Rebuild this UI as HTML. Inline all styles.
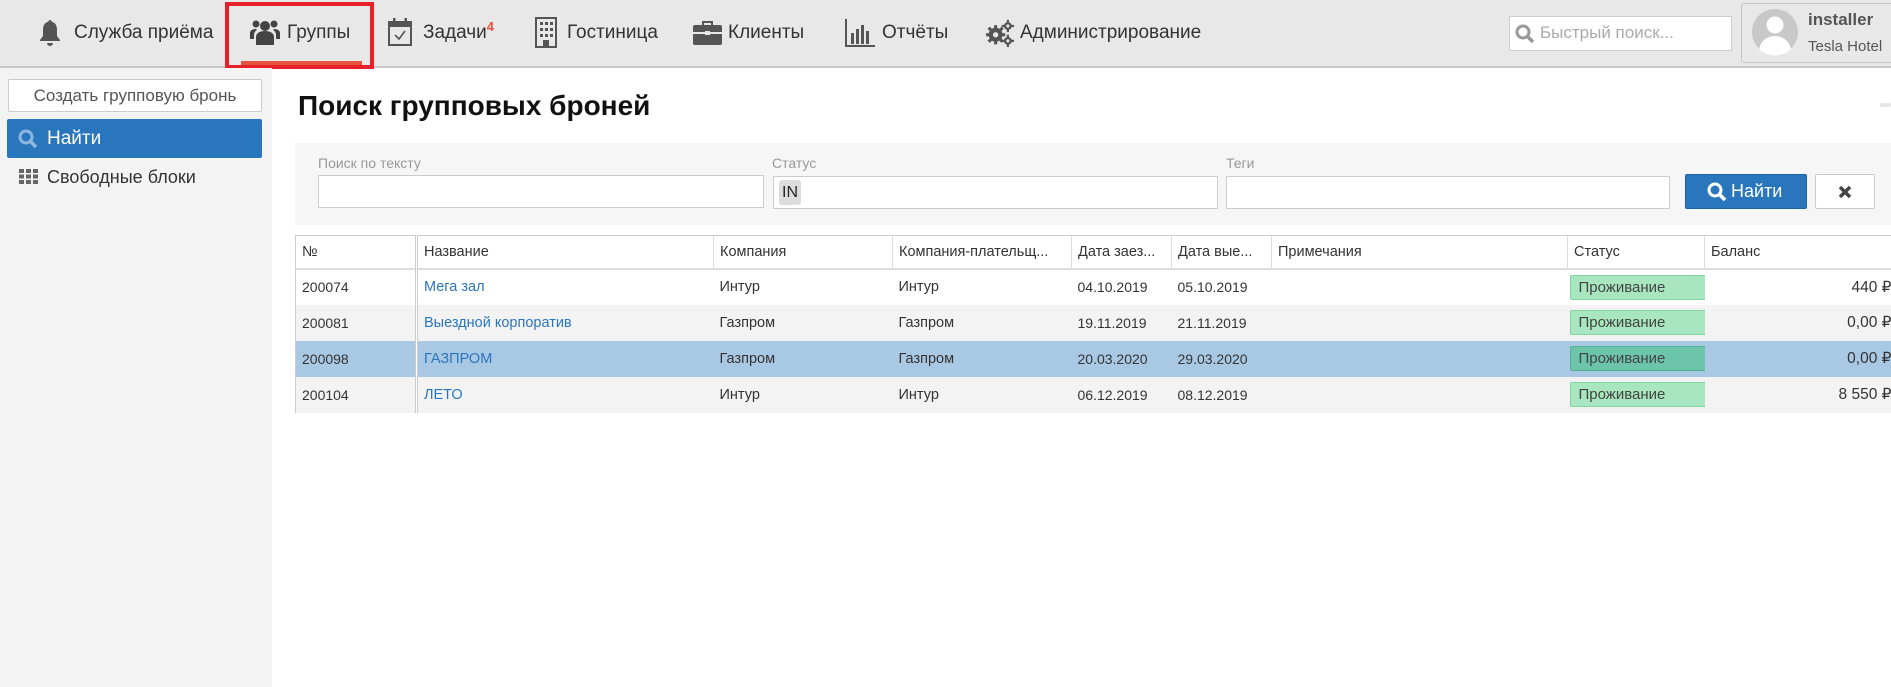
<!DOCTYPE html>
<html><head><meta charset="utf-8">
<style>
*{box-sizing:border-box;margin:0;padding:0}
body{width:1891px;height:687px;overflow:hidden;background:#fff;font-family:"Liberation Sans",sans-serif;color:#333;position:relative}
.abs{position:absolute}
#top{left:0;top:0;width:1891px;height:68px;background:#e8e8e8;border-bottom:2px solid #c8c8c8}
.nav{position:absolute;top:21px;font-size:19px;color:#333;white-space:nowrap;line-height:24px}
.ico{position:absolute;top:18px}
#side{left:0;top:68px;width:272px;height:619px;background:#f3f3f3}
.inp{position:absolute;background:#fff;border:1px solid #ccc}
.lbl{position:absolute;top:155px;font-size:14px;color:#999}
table{position:absolute;left:295px;top:235px;border-collapse:collapse;table-layout:fixed;width:1596px;font-size:14.5px}
th{font-weight:normal;text-align:left;height:33px;padding:0 6px;border-top:1px solid #ccc;border-bottom:2px solid #ddd;border-left:1px solid #ddd;white-space:nowrap;overflow:hidden;color:#333}
td{height:36px;padding:0 6px;white-space:nowrap;overflow:hidden}
tr.g td{background:#f3f3f3}
tr.s td{background:#a9c8e4}
td.n{font-size:14px}
td.c2{border-left:3px double #ccc}
th.c2{border-left:3px double #ccc}
a{color:#2a76bd;text-decoration:none}
.badge{display:block;width:139px;height:25px;line-height:23px;background:#a8e6bf;border:1px solid #7fd69f;border-radius:2px;padding-left:8px;color:#444;font-size:15px;margin-left:-4px}
tr.s .badge{background:#6cc4aa;border-color:#4fb58f}
td.r{text-align:right;padding-right:0;font-size:15.5px}
</style></head><body>
<div id="top" class="abs"></div>
<svg class="ico" style="left:38px" width="24" height="30" viewBox="0 0 24 30"><path d="M12 2c-1 0-1.6.7-1.6 1.6C6.5 4.5 5 7.7 5 12v6l-3 4v1h20v-1l-3-4v-6c0-4.3-1.5-7.5-5.4-8.4C13.6 2.7 13 2 12 2zM9 25a3 3 0 006 0z" fill="#555"/></svg>
<div class="nav" style="left:74px">Служба приёма</div>
<svg class="ico" style="left:250px;top:17px" width="30" height="30" viewBox="0 0 30 30"><circle cx="15" cy="9" r="5" fill="#444"/><circle cx="6" cy="7" r="3.5" fill="#444"/><circle cx="24" cy="7" r="3.5" fill="#444"/><path d="M6 28v-8c0-4 4-6 9-6s9 2 9 6v8z" fill="#444"/><path d="M0 22v-6c0-2 2-4 6-4l1 1c-2 1-3 3-3 5v4z M30 22v-6c0-2-2-4-6-4l-1 1c2 1 3 3 3 5v4z" fill="#444"/></svg>
<div class="nav" style="left:287px">Группы</div>
<div class="abs" style="left:241px;top:61px;width:121px;height:4px;background:#e5533d"></div>
<div class="abs" style="left:225px;top:2px;width:149px;height:67px;border:4px solid #e8202a"></div>
<svg class="ico" style="left:387px;top:17px" width="26" height="30" viewBox="0 0 26 30"><rect x="2" y="5" width="22" height="23" fill="none" stroke="#555" stroke-width="2"/><rect x="2" y="5" width="22" height="5" fill="#555"/><rect x="6" y="1" width="2.5" height="7" fill="#555"/><rect x="17.5" y="1" width="2.5" height="7" fill="#555"/><path d="M8 18l4 4 6-8" fill="none" stroke="#555" stroke-width="1.6"/></svg>
<div class="nav" style="left:423px">Задачи<sup style="color:#e5533d;font-size:13px;font-weight:bold;vertical-align:top;position:relative;top:-6px">4</sup></div>
<svg class="ico" style="left:535px;top:17px" width="22" height="31" viewBox="0 0 22 31"><rect x="1" y="1" width="20" height="29" fill="none" stroke="#555" stroke-width="2"/><g fill="#555"><rect x="5" y="5" width="3" height="3"/><rect x="10" y="5" width="3" height="3"/><rect x="15" y="5" width="3" height="3"/><rect x="5" y="11" width="3" height="3"/><rect x="10" y="11" width="3" height="3"/><rect x="15" y="11" width="3" height="3"/><rect x="5" y="17" width="3" height="3"/><rect x="10" y="17" width="3" height="3"/><rect x="15" y="17" width="3" height="3"/><rect x="8" y="23" width="6" height="7"/></g></svg>
<div class="nav" style="left:567px">Гостиница</div>
<svg class="ico" style="left:693px;top:21px" width="29" height="24" viewBox="0 0 29 24"><path d="M10 4V1h9v3" fill="none" stroke="#555" stroke-width="2"/><rect x="0" y="4" width="29" height="20" rx="2" fill="#555"/><rect x="0" y="11" width="29" height="2" fill="#e8e8e8"/><rect x="12" y="10" width="5" height="4" fill="#e8e8e8"/></svg>
<div class="nav" style="left:728px">Клиенты</div>
<svg class="ico" style="left:845px;top:19px" width="30" height="28" viewBox="0 0 30 28"><path d="M1 0v27h29" fill="none" stroke="#555" stroke-width="2"/><g fill="#555"><rect x="6" y="14" width="3" height="11"/><rect x="11" y="10" width="3" height="15"/><rect x="16" y="6" width="3" height="19"/><rect x="21" y="12" width="3" height="13"/></g></svg>
<div class="nav" style="left:882px">Отчёты</div>
<svg class="ico" style="left:986px;top:19px" width="28" height="28" viewBox="0 0 32 32"><g fill="#555"><circle cx="11" cy="18" r="8"/><circle cx="25" cy="8" r="4.5"/><circle cx="25" cy="25" r="4.5"/></g><g stroke="#555" stroke-width="3.5"><path d="M11 7v22M0 18h22M3 10l16 16M19 10L3 26"/><path d="M25 1v14M18 8h14M25 18v14M18 25h14" stroke-width="2.5"/></g><circle cx="11" cy="18" r="3" fill="#e8e8e8"/><circle cx="25" cy="8" r="1.8" fill="#e8e8e8"/><circle cx="25" cy="25" r="1.8" fill="#e8e8e8"/></svg>
<div class="nav" style="left:1020px">Администрирование</div>
<div class="inp" style="left:1509px;top:16px;width:223px;height:35px;border-color:#ccc"></div>
<svg class="abs" style="left:1515px;top:24px" width="20" height="20" viewBox="0 0 20 20"><circle cx="8" cy="8" r="6" fill="none" stroke="#999" stroke-width="3"/><path d="M12 12l6 6" stroke="#999" stroke-width="3.5"/></svg>
<div class="abs" style="left:1540px;top:23px;font-size:17px;color:#aaa">Быстрый поиск...</div>
<div class="abs" style="left:1741px;top:3px;width:155px;height:60px;border:1px solid #c5c5c5;border-radius:3px;background:#e8e8e8;overflow:hidden">
<svg class="abs" style="left:10px;top:4px" width="46" height="48" viewBox="0 0 46 48"><circle cx="23" cy="24" r="23" fill="#c8c8c8"/><circle cx="23" cy="17" r="8.5" fill="#fff"/><path d="M7 41c2-9 9-13 16-13s14 4 16 13a23 23 0 01-32 0z" fill="#fff"/></svg>
<div class="abs" style="left:66px;top:6px;font-size:17px;font-weight:bold;color:#555">installer</div>
<div class="abs" style="left:66px;top:34px;font-size:15px;color:#555">Tesla Hotel</div>
</div>
<div id="side" class="abs"></div>
<div class="abs" style="left:8px;top:79px;width:254px;height:33px;background:#fff;border:1px solid #ccc;border-radius:2px;text-align:center;line-height:31px;font-size:17px;color:#555">Создать групповую бронь</div>
<div class="abs" style="left:7px;top:119px;width:255px;height:39px;background:#2a76bd;border-radius:2px"></div>
<svg class="abs" style="left:18px;top:129px" width="20" height="20" viewBox="0 0 20 20"><circle cx="8" cy="8" r="6" fill="none" stroke="#8cb8e0" stroke-width="3"/><path d="M12 12l6 6" stroke="#8cb8e0" stroke-width="3.5"/></svg>
<div class="abs" style="left:47px;top:128px;font-size:19px;color:#fff">Найти</div>
<svg class="abs" style="left:19px;top:169px" width="19" height="15" viewBox="0 0 19 15"><g fill="#666"><rect x="0" y="0" width="5" height="4"/><rect x="7" y="0" width="5" height="4"/><rect x="14" y="0" width="5" height="4"/><rect x="0" y="5.5" width="5" height="4"/><rect x="7" y="5.5" width="5" height="4"/><rect x="14" y="5.5" width="5" height="4"/><rect x="0" y="11" width="5" height="4"/><rect x="7" y="11" width="5" height="4"/><rect x="14" y="11" width="5" height="4"/></g></svg>
<div class="abs" style="left:47px;top:167px;font-size:18px;color:#333">Свободные блоки</div>
<div class="abs" style="left:298px;top:90px;font-size:28px;font-weight:bold;color:#111">Поиск групповых броней</div>
<div class="abs" style="left:1880px;top:103px;width:11px;height:4px;background:#e5e5e5;border-radius:2px"></div>
<div class="abs" style="left:295px;top:143px;width:1596px;height:82px;background:#f6f6f6"></div>
<div class="lbl" style="left:318px">Поиск по тексту</div>
<div class="lbl" style="left:772px">Статус</div>
<div class="lbl" style="left:1226px">Теги</div>
<div class="inp" style="left:318px;top:175px;width:446px;height:33px"></div>
<div class="inp" style="left:773px;top:176px;width:445px;height:33px"></div>
<div class="abs" style="left:779px;top:180px;width:22px;height:25px;background:#ddd;border-radius:3px;font-size:16px;line-height:25px;padding-left:3px;color:#222">IN</div>
<div class="inp" style="left:1226px;top:176px;width:444px;height:33px"></div>
<div class="abs" style="left:1685px;top:174px;width:122px;height:35px;background:#2a76bd;border:1px solid #1e62a1;border-radius:2px"></div>
<svg class="abs" style="left:1707px;top:182px" width="20" height="20" viewBox="0 0 20 20"><circle cx="8" cy="8" r="6" fill="none" stroke="#fff" stroke-width="3"/><path d="M12 12l6 6" stroke="#fff" stroke-width="3.5"/></svg>
<div class="abs" style="left:1731px;top:181px;font-size:18px;color:#fff">Найти</div>
<div class="abs" style="left:1815px;top:174px;width:60px;height:35px;background:#fff;border:1px solid #ccc;border-radius:2px"></div>
<svg class="abs" style="left:1838px;top:185px" width="14" height="14" viewBox="0 0 14 14"><path d="M2 2l10 10M12 2L2 12" stroke="#444" stroke-width="3.5"/></svg>
<table>
<colgroup><col style="width:121px"><col style="width:297px"><col style="width:179px"><col style="width:179px"><col style="width:100px"><col style="width:100px"><col style="width:296px"><col style="width:137px"><col style="width:187px"></colgroup>
<tr><th style="border-left:1px solid #ccc">№</th><th class="c2">Название</th><th>Компания</th><th>Компания-плательщ...</th><th>Дата заез...</th><th>Дата вые...</th><th>Примечания</th><th>Статус</th><th>Баланс</th></tr>
<tr><td class="n" style="border-left:1px solid #ccc">200074</td><td class="c2"><a>Мега зал</a></td><td>Интур</td><td>Интур</td><td class="n">04.10.2019</td><td class="n">05.10.2019</td><td></td><td><span class="badge">Проживание</span></td><td class="r">440 ₽</td></tr>
<tr class="g"><td class="n" style="border-left:1px solid #ccc">200081</td><td class="c2"><a>Выездной корпоратив</a></td><td>Газпром</td><td>Газпром</td><td class="n">19.11.2019</td><td class="n">21.11.2019</td><td></td><td><span class="badge">Проживание</span></td><td class="r">0,00 ₽</td></tr>
<tr class="s"><td class="n" style="border-left:1px solid #ccc">200098</td><td class="c2"><a>ГАЗПРОМ</a></td><td>Газпром</td><td>Газпром</td><td class="n">20.03.2020</td><td class="n">29.03.2020</td><td></td><td><span class="badge">Проживание</span></td><td class="r">0,00 ₽</td></tr>
<tr class="g"><td class="n" style="border-left:1px solid #ccc">200104</td><td class="c2"><a>ЛЕТО</a></td><td>Интур</td><td>Интур</td><td class="n">06.12.2019</td><td class="n">08.12.2019</td><td></td><td><span class="badge">Проживание</span></td><td class="r">8 550 ₽</td></tr>
</table>
</body></html>
